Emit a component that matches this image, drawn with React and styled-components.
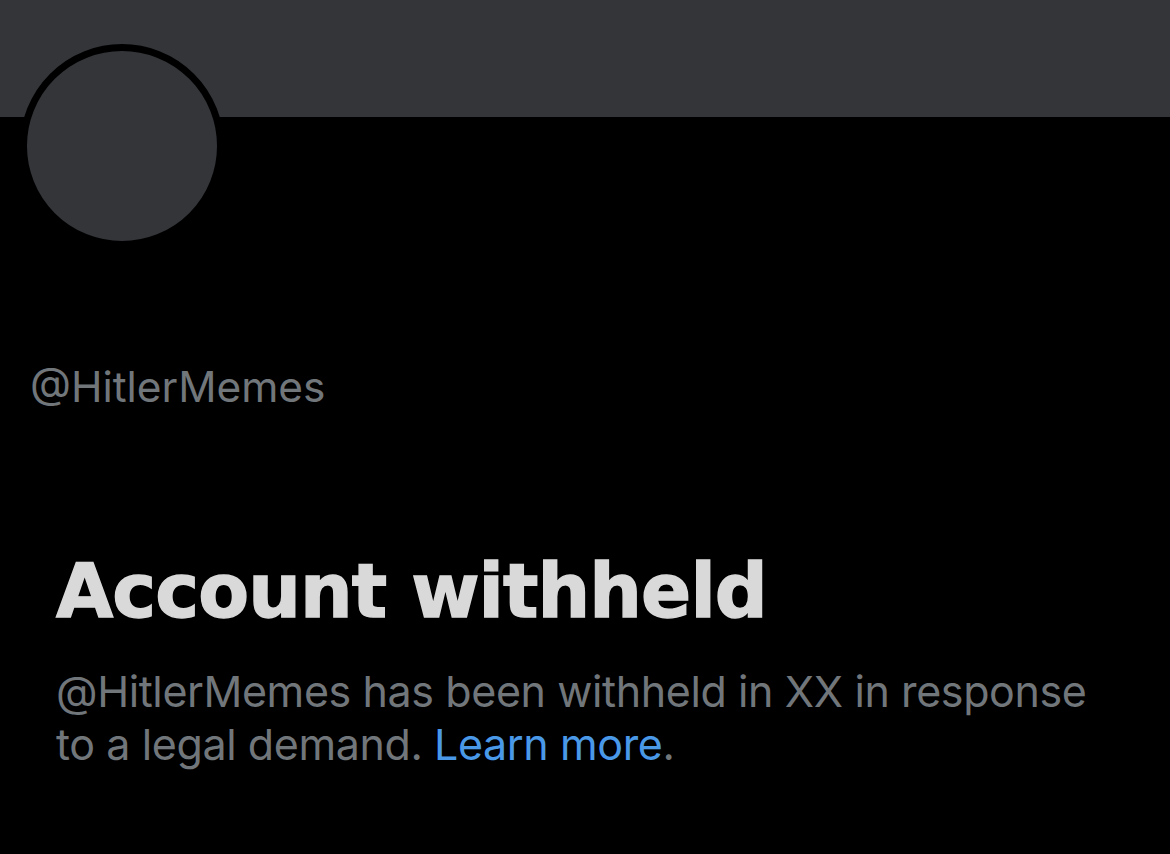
import styled, { createGlobalStyle } from "styled-components";

const GlobalStyle = createGlobalStyle`
  html, body {
    margin: 0;
    padding: 0;
    background: #000;
  }
  body {
    font-family: Inter, "Noto Sans", sans-serif;
  }
`;

const Page = styled.div`
  position: relative;
  width: 1170px;
  height: 854px;
  background: #000;
  overflow: hidden;
`;

const Banner = styled.div`
  height: 117px;
  background: #333539;
`;

const Avatar = styled.div`
  position: absolute;
  top: 44px;
  left: 20px;
  width: 190px;
  height: 190px;
  border: 7px solid #000;
  border-radius: 50%;
  background: #333539;
`;

const Handle = styled.div`
  margin-top: 246px;
  padding-left: 30px;
  font-size: 42.4px;
  line-height: 48px;
  color: #71767b;
`;

const Notice = styled.section`
  margin-top: 140px;
  padding-left: 56px;
`;

const Title = styled.h1`
  margin: 0;
  font-family: "DejaVu Sans", Inter, sans-serif;
  font-weight: 700;
  font-size: 74px;
  line-height: 80px;
  letter-spacing: -0.9px;
  color: #d9d9d9;
  -webkit-text-stroke: 1.4px #d9d9d9;
`;

const Body = styled.p`
  margin: 34px 0 0;
  max-width: 1060px;
  font-size: 43px;
  line-height: 53px;
  color: #71767b;
  letter-spacing: -0.4px;
`;

const Link = styled.a`
  color: #4a99e9;
  text-decoration: none;
`;

export default function App() {
  return (
    <Page>
      <GlobalStyle />
      <Banner />
      <Avatar />
      <Handle>@HitlerMemes</Handle>
      <Notice>
        <Title>Account withheld</Title>
        <Body>
          @HitlerMemes has been withheld in XX in response to a legal demand.{" "}
          <Link href="#">Learn more</Link>.
        </Body>
      </Notice>
    </Page>
  );
}
